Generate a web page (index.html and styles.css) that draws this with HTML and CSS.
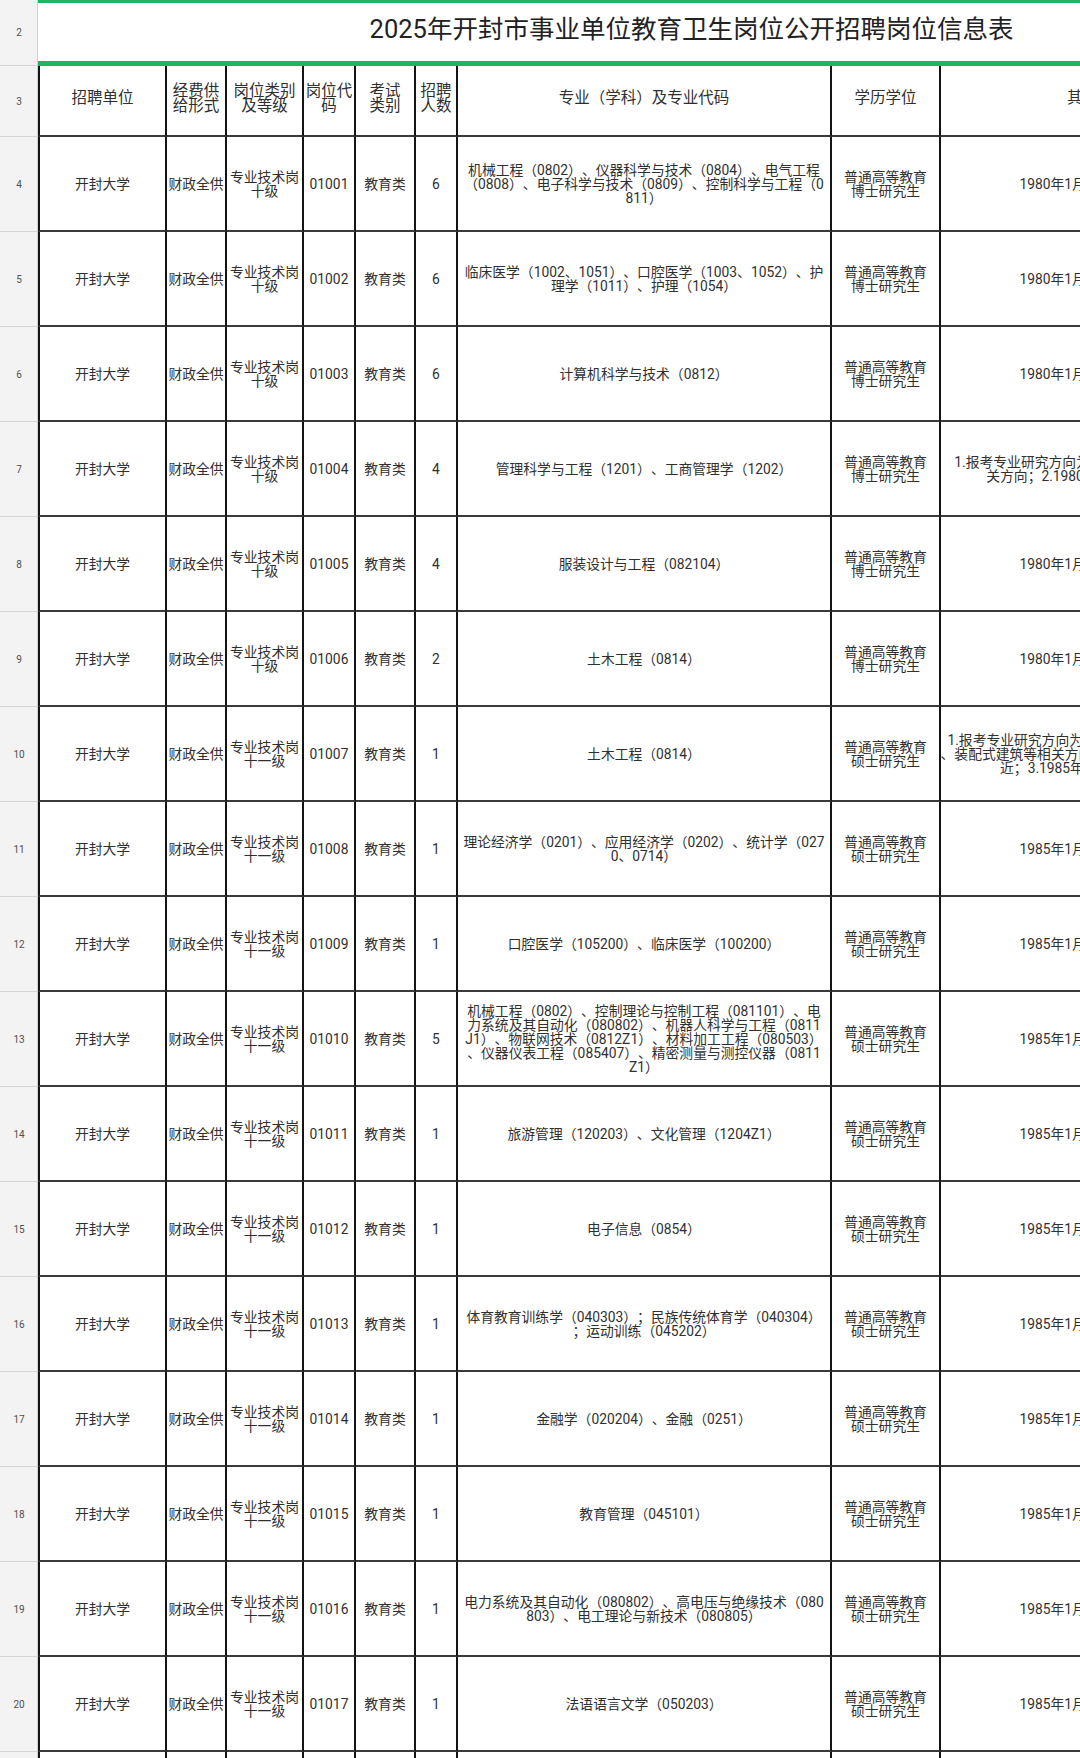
FILE: index.html
```html
<!DOCTYPE html>
<html lang="zh-CN">
<head>
<meta charset="utf-8">
<title>2025年开封市事业单位教育卫生岗位公开招聘岗位信息表</title>
<link rel="stylesheet" href="styles.css">
</head>
<body>
<div class="viewport">
  <div class="sheet">
    <div class="rh">2</div>
    <div class="title"><span>2025年开封市事业单位教育卫生岗位公开招聘岗位信息表</span></div>

    <div class="rh">3</div>
    <div class="c hd first"><span>招聘单位</span></div>
    <div class="c hd"><span>经费供<br>给形式</span></div>
    <div class="c hd"><span>岗位类别<br>及等级</span></div>
    <div class="c hd"><span>岗位代<br>码</span></div>
    <div class="c hd"><span>考试<br>类别</span></div>
    <div class="c hd"><span>招聘<br>人数</span></div>
    <div class="c hd"><span>专业（学科）及专业代码</span></div>
    <div class="c hd"><span>学历学位</span></div>
    <div class="c hd"><span>其他条件</span></div>
    <div class="c hd"><span>备注</span></div>

    <div class="rh">4</div>
    <div class="c first"><span>开封大学</span></div>
    <div class="c"><span>财政全供</span></div>
    <div class="c"><span>专业技术岗<br>十级</span></div>
    <div class="c"><span>01001</span></div>
    <div class="c"><span>教育类</span></div>
    <div class="c"><span>6</span></div>
    <div class="c"><span>机械工程（0802）、仪器科学与技术（0804）、电气工程<br>（0808）、电子科学与技术（0809）、控制科学与工程（0<br>811）</span></div>
    <div class="c"><span>普通高等教育<br>博士研究生</span></div>
    <div class="c"><span>1980年1月1日及以后出生</span></div>
    <div class="c"><span></span></div>

    <div class="rh">5</div>
    <div class="c first"><span>开封大学</span></div>
    <div class="c"><span>财政全供</span></div>
    <div class="c"><span>专业技术岗<br>十级</span></div>
    <div class="c"><span>01002</span></div>
    <div class="c"><span>教育类</span></div>
    <div class="c"><span>6</span></div>
    <div class="c"><span>临床医学（1002、1051）、口腔医学（1003、1052）、护<br>理学（1011）、护理（1054）</span></div>
    <div class="c"><span>普通高等教育<br>博士研究生</span></div>
    <div class="c"><span>1980年1月1日及以后出生</span></div>
    <div class="c"><span></span></div>

    <div class="rh">6</div>
    <div class="c first"><span>开封大学</span></div>
    <div class="c"><span>财政全供</span></div>
    <div class="c"><span>专业技术岗<br>十级</span></div>
    <div class="c"><span>01003</span></div>
    <div class="c"><span>教育类</span></div>
    <div class="c"><span>6</span></div>
    <div class="c"><span>计算机科学与技术（0812）</span></div>
    <div class="c"><span>普通高等教育<br>博士研究生</span></div>
    <div class="c"><span>1980年1月1日及以后出生</span></div>
    <div class="c"><span></span></div>

    <div class="rh">7</div>
    <div class="c first"><span>开封大学</span></div>
    <div class="c"><span>财政全供</span></div>
    <div class="c"><span>专业技术岗<br>十级</span></div>
    <div class="c"><span>01004</span></div>
    <div class="c"><span>教育类</span></div>
    <div class="c"><span>4</span></div>
    <div class="c"><span>管理科学与工程（1201）、工商管理学（1202）</span></div>
    <div class="c"><span>普通高等教育<br>博士研究生</span></div>
    <div class="c"><span>1.报考专业研究方向为企业管理或产业经济学相<br>关方向；2.1980年1月1日以后出生。</span></div>
    <div class="c"><span></span></div>

    <div class="rh">8</div>
    <div class="c first"><span>开封大学</span></div>
    <div class="c"><span>财政全供</span></div>
    <div class="c"><span>专业技术岗<br>十级</span></div>
    <div class="c"><span>01005</span></div>
    <div class="c"><span>教育类</span></div>
    <div class="c"><span>4</span></div>
    <div class="c"><span>服装设计与工程（082104）</span></div>
    <div class="c"><span>普通高等教育<br>博士研究生</span></div>
    <div class="c"><span>1980年1月1日及以后出生</span></div>
    <div class="c"><span></span></div>

    <div class="rh">9</div>
    <div class="c first"><span>开封大学</span></div>
    <div class="c"><span>财政全供</span></div>
    <div class="c"><span>专业技术岗<br>十级</span></div>
    <div class="c"><span>01006</span></div>
    <div class="c"><span>教育类</span></div>
    <div class="c"><span>2</span></div>
    <div class="c"><span>土木工程（0814）</span></div>
    <div class="c"><span>普通高等教育<br>博士研究生</span></div>
    <div class="c"><span>1980年1月1日及以后出生</span></div>
    <div class="c"><span></span></div>

    <div class="rh">10</div>
    <div class="c first"><span>开封大学</span></div>
    <div class="c"><span>财政全供</span></div>
    <div class="c"><span>专业技术岗<br>十一级</span></div>
    <div class="c"><span>01007</span></div>
    <div class="c"><span>教育类</span></div>
    <div class="c"><span>1</span></div>
    <div class="c"><span>土木工程（0814）</span></div>
    <div class="c"><span>普通高等教育<br>硕士研究生</span></div>
    <div class="c"><span>1.报考专业研究方向为结构工程、智能建造、桥梁<br>、装配式建筑等相关方向；2.研究方向与岗位需求相<br>近；3.1985年1月1日及以后出生</span></div>
    <div class="c"><span></span></div>

    <div class="rh">11</div>
    <div class="c first"><span>开封大学</span></div>
    <div class="c"><span>财政全供</span></div>
    <div class="c"><span>专业技术岗<br>十一级</span></div>
    <div class="c"><span>01008</span></div>
    <div class="c"><span>教育类</span></div>
    <div class="c"><span>1</span></div>
    <div class="c"><span>理论经济学（0201）、应用经济学（0202）、统计学（027<br>0、0714）</span></div>
    <div class="c"><span>普通高等教育<br>硕士研究生</span></div>
    <div class="c"><span>1985年1月1日及以后出生</span></div>
    <div class="c"><span></span></div>

    <div class="rh">12</div>
    <div class="c first"><span>开封大学</span></div>
    <div class="c"><span>财政全供</span></div>
    <div class="c"><span>专业技术岗<br>十一级</span></div>
    <div class="c"><span>01009</span></div>
    <div class="c"><span>教育类</span></div>
    <div class="c"><span>1</span></div>
    <div class="c"><span>口腔医学（105200）、临床医学（100200）</span></div>
    <div class="c"><span>普通高等教育<br>硕士研究生</span></div>
    <div class="c"><span>1985年1月1日及以后出生</span></div>
    <div class="c"><span></span></div>

    <div class="rh">13</div>
    <div class="c first"><span>开封大学</span></div>
    <div class="c"><span>财政全供</span></div>
    <div class="c"><span>专业技术岗<br>十一级</span></div>
    <div class="c"><span>01010</span></div>
    <div class="c"><span>教育类</span></div>
    <div class="c"><span>5</span></div>
    <div class="c"><span>机械工程（0802）、控制理论与控制工程（081101）、电<br>力系统及其自动化（080802）、机器人科学与工程（0811<br>J1）、物联网技术（0812Z1）、材料加工工程（080503）<br>、仪器仪表工程（085407）、精密测量与测控仪器（0811<br>Z1）</span></div>
    <div class="c"><span>普通高等教育<br>硕士研究生</span></div>
    <div class="c"><span>1985年1月1日及以后出生</span></div>
    <div class="c"><span></span></div>

    <div class="rh">14</div>
    <div class="c first"><span>开封大学</span></div>
    <div class="c"><span>财政全供</span></div>
    <div class="c"><span>专业技术岗<br>十一级</span></div>
    <div class="c"><span>01011</span></div>
    <div class="c"><span>教育类</span></div>
    <div class="c"><span>1</span></div>
    <div class="c"><span>旅游管理（120203）、文化管理（1204Z1）</span></div>
    <div class="c"><span>普通高等教育<br>硕士研究生</span></div>
    <div class="c"><span>1985年1月1日及以后出生</span></div>
    <div class="c"><span></span></div>

    <div class="rh">15</div>
    <div class="c first"><span>开封大学</span></div>
    <div class="c"><span>财政全供</span></div>
    <div class="c"><span>专业技术岗<br>十一级</span></div>
    <div class="c"><span>01012</span></div>
    <div class="c"><span>教育类</span></div>
    <div class="c"><span>1</span></div>
    <div class="c"><span>电子信息（0854）</span></div>
    <div class="c"><span>普通高等教育<br>硕士研究生</span></div>
    <div class="c"><span>1985年1月1日及以后出生</span></div>
    <div class="c"><span></span></div>

    <div class="rh">16</div>
    <div class="c first"><span>开封大学</span></div>
    <div class="c"><span>财政全供</span></div>
    <div class="c"><span>专业技术岗<br>十一级</span></div>
    <div class="c"><span>01013</span></div>
    <div class="c"><span>教育类</span></div>
    <div class="c"><span>1</span></div>
    <div class="c"><span>体育教育训练学（040303）；民族传统体育学（040304）<br>；运动训练（045202）</span></div>
    <div class="c"><span>普通高等教育<br>硕士研究生</span></div>
    <div class="c"><span>1985年1月1日及以后出生</span></div>
    <div class="c"><span></span></div>

    <div class="rh">17</div>
    <div class="c first"><span>开封大学</span></div>
    <div class="c"><span>财政全供</span></div>
    <div class="c"><span>专业技术岗<br>十一级</span></div>
    <div class="c"><span>01014</span></div>
    <div class="c"><span>教育类</span></div>
    <div class="c"><span>1</span></div>
    <div class="c"><span>金融学（020204）、金融（0251）</span></div>
    <div class="c"><span>普通高等教育<br>硕士研究生</span></div>
    <div class="c"><span>1985年1月1日及以后出生</span></div>
    <div class="c"><span></span></div>

    <div class="rh">18</div>
    <div class="c first"><span>开封大学</span></div>
    <div class="c"><span>财政全供</span></div>
    <div class="c"><span>专业技术岗<br>十一级</span></div>
    <div class="c"><span>01015</span></div>
    <div class="c"><span>教育类</span></div>
    <div class="c"><span>1</span></div>
    <div class="c"><span>教育管理（045101）</span></div>
    <div class="c"><span>普通高等教育<br>硕士研究生</span></div>
    <div class="c"><span>1985年1月1日及以后出生</span></div>
    <div class="c"><span></span></div>

    <div class="rh">19</div>
    <div class="c first"><span>开封大学</span></div>
    <div class="c"><span>财政全供</span></div>
    <div class="c"><span>专业技术岗<br>十一级</span></div>
    <div class="c"><span>01016</span></div>
    <div class="c"><span>教育类</span></div>
    <div class="c"><span>1</span></div>
    <div class="c"><span>电力系统及其自动化（080802）、高电压与绝缘技术（080<br>803）、电工理论与新技术（080805）</span></div>
    <div class="c"><span>普通高等教育<br>硕士研究生</span></div>
    <div class="c"><span>1985年1月1日及以后出生</span></div>
    <div class="c"><span></span></div>

    <div class="rh">20</div>
    <div class="c first"><span>开封大学</span></div>
    <div class="c"><span>财政全供</span></div>
    <div class="c"><span>专业技术岗<br>十一级</span></div>
    <div class="c"><span>01017</span></div>
    <div class="c"><span>教育类</span></div>
    <div class="c"><span>1</span></div>
    <div class="c"><span>法语语言文学（050203）</span></div>
    <div class="c"><span>普通高等教育<br>硕士研究生</span></div>
    <div class="c"><span>1985年1月1日及以后出生</span></div>
    <div class="c"><span></span></div>

    <div class="rh">21</div>
    <div class="c first"><span>开封大学</span></div>
    <div class="c"><span>财政全供</span></div>
    <div class="c"><span>专业技术岗<br>十一级</span></div>
    <div class="c"><span>01018</span></div>
    <div class="c"><span>教育类</span></div>
    <div class="c"><span>1</span></div>
    <div class="c"><span></span></div>
    <div class="c"><span>普通高等教育<br>硕士研究生</span></div>
    <div class="c"><span>1985年1月1日及以后出生</span></div>
    <div class="c"><span></span></div>
  </div>
</div>
</body>
</html>
```

FILE: styles.css
```css
html, body {
  margin: 0;
  padding: 0;
  background: #ffffff;
}

body {
  font-family: Roboto, "Noto Sans CJK SC", "Noto Sans", sans-serif;
  color: #2f2f2f;
  text-spacing-trim: space-all;
}

.viewport {
  width: 1080px;
  height: 1758px;
  overflow: hidden;
}

.sheet {
  display: grid;
  width: 1345px;
  grid-template-columns: 38px 129px 60px 77px 52px 60px 42px 374px 109px 316px 88px;
  grid-template-rows: 66px 71px repeat(18, 95px);
}

.rh {
  box-sizing: border-box;
  background: #f3f3f3;
  border-right: 1px solid #d2d2d2;
  border-bottom: 1px solid #d6d6d6;
  display: flex;
  align-items: center;
  justify-content: center;
  font-size: 10px;
  color: #505050;
  padding-left: 1px;
}

.title {
  grid-column: 2 / -1;
  box-sizing: border-box;
  border-top: 3px solid #1fb463;
  border-bottom: 5px solid #1fb463;
  display: flex;
  align-items: center;
  justify-content: center;
  padding-bottom: 12px;
  font-size: 25.5px;
  color: #222222;
  white-space: nowrap;
}

.c {
  box-sizing: border-box;
  border-right: 2px solid #141414;
  border-bottom: 2px solid #3a3a3a;
  display: flex;
  align-items: center;
  justify-content: center;
  text-align: center;
  font-size: 13.8px;
  line-height: 14px;
  white-space: nowrap;
  padding: 0 1px;
  overflow: hidden;
}

.c.first {
  border-left: 2px solid #141414;
}

.c.hd {
  font-size: 15.5px;
  line-height: 15px;
  padding-bottom: 4px;
}
```
